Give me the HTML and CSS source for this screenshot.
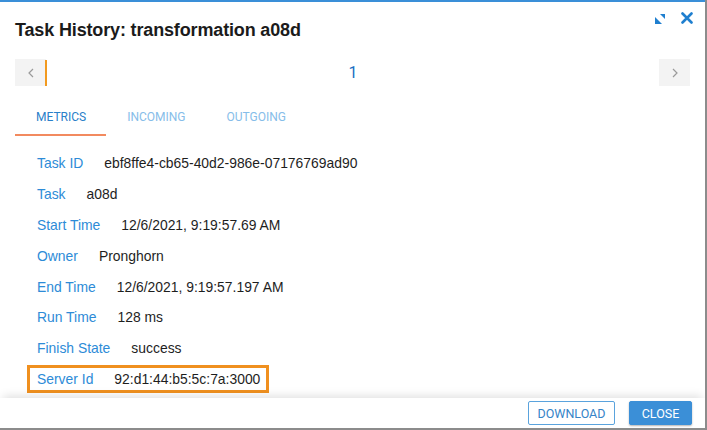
FILE: index.html
```html
<!DOCTYPE html>
<html>
<head>
<meta charset="utf-8">
<link rel="stylesheet" href="styles.css">
</head>
<body>
<div class="dialog">
  <div class="header">
    <h1 class="title">Task History: transformation a08d</h1>
    <div class="actions">
      <svg class="ico-expand" width="10" height="10" viewBox="0 0 10 10"><polygon points="5,0 10,0 10,5" fill="#1f7fcf"/><polygon points="0,3 0,10 7,10" fill="#1f7fcf"/></svg>
      <svg class="ico-close" width="12" height="12" viewBox="0 0 12 12"><path d="M1.5 1.5 L10.5 10.5 M10.5 1.5 L1.5 10.5" stroke="#1f7fcf" stroke-width="2.6" stroke-linecap="round"/></svg>
    </div>
  </div>
  <div class="pager">
    <div class="pbtn"><svg width="6" height="10" viewBox="0 0 6 10"><path d="M5 1 L1 5 L5 9" fill="none" stroke="#9a9a9a" stroke-width="1.2"/></svg></div>
    <div class="pmark"></div>
    <div class="pnum">1</div>
    <div class="pbtn"><svg width="6" height="10" viewBox="0 0 6 10"><path d="M1 1 L5 5 L1 9" fill="none" stroke="#9a9a9a" stroke-width="1.2"/></svg></div>
  </div>
  <div class="tabs">
    <div class="tab active">METRICS</div>
    <div class="tab">INCOMING</div>
    <div class="tab">OUTGOING</div>
  </div>
  <div class="content">
    <div class="row"><span class="lbl">Task ID</span><span class="val">ebf8ffe4-cb65-40d2-986e-07176769ad90</span></div>
    <div class="row"><span class="lbl">Task</span><span class="val">a08d</span></div>
    <div class="row"><span class="lbl">Start Time</span><span class="val">12/6/2021, 9:19:57.69 AM</span></div>
    <div class="row"><span class="lbl">Owner</span><span class="val">Pronghorn</span></div>
    <div class="row"><span class="lbl">End Time</span><span class="val">12/6/2021, 9:19:57.197 AM</span></div>
    <div class="row"><span class="lbl">Run Time</span><span class="val">128 ms</span></div>
    <div class="row"><span class="lbl">Finish State</span><span class="val">success</span></div>
    <div class="row hl"><span class="lbl">Server Id</span><span class="val">92:d1:44:b5:5c:7a:3000</span></div>
  </div>
  <div class="footer">
    <button class="btn outline">DOWNLOAD</button>
    <button class="btn primary">CLOSE</button>
  </div>
</div>
</body>
</html>
```
FILE: styles.css
```css
html, body { margin: 0; padding: 0; }
body { background: #8c8c8c; width: 707px; height: 430px; overflow: hidden; }
.dialog {
  width: 705px; height: 428px; background: #fff;
  border-top: 2px solid #3a8fd8; box-sizing: border-box;
  display: flex; flex-direction: column; overflow: hidden;
  font-family: "Liberation Sans", Arial, sans-serif;
}
.header { height: 50px; flex: none; display: flex; justify-content: space-between; align-items: flex-start; padding: 0 12px 0 15px; }
.title { margin: 18px 0 0; font-size: 18px; font-weight: bold; color: #1b1b1b; line-height: 20px; letter-spacing: -0.15px; }
.actions { display: flex; align-items: center; margin-top: 10px; gap: 16px; }
.ico-expand { margin-top: 1px; }
.pager { flex: none; display: flex; align-items: center; height: 27px; margin: 7px 15px 0 15px; }
.pbtn { width: 31px; height: 27px; background: #f3f3f3; display: flex; align-items: center; justify-content: center; }
.pmark { width: 2px; height: 26px; background: #f29a1f; margin-left: -1px; }
.pnum { flex: 1; text-align: center; font-family: Roboto, sans-serif; font-size: 16px; color: #1a6ec2; }
.tabs { flex: none; display: flex; margin: 14px 0 0 15px; height: 36px; }
.tab { font-family: Roboto, sans-serif; font-size: 12px; color: #86bde9; padding: 0 20px 0 21px; line-height: 35px; }
.tab.active { color: #2a80c9; border-bottom: 2px solid #f28a5f; }
.content { flex: 1; padding-top: 12px; overflow: hidden; display: flex; flex-direction: column; }
.row { height: 30.8px; display: flex; align-items: center; padding-left: 37px; font-size: 13.9px; }
.lbl { color: #2d8bd7; margin-right: 21px; }
.val { color: #1e1e1e; }
.row.hl { margin-left: 27px; padding: 0 6px 0 7px; align-self: flex-start; width: max-content; height: 22px; border: 3px solid #f0901f; margin-top: 1px; }
.footer { flex: none; height: 30px; display: flex; justify-content: flex-end; align-items: center; gap: 14px; padding-right: 13px; box-shadow: 0 -5px 10px -3px rgba(0,0,0,0.13); position: relative; }
.btn { font-family: Roboto, sans-serif; font-size: 12.5px; height: 24px; border-radius: 2px; padding: 0; cursor: pointer; }
.btn.outline { width: 87px; background: #fff; border: 1px solid #5aa3dd; color: #3584c8; }
.btn.primary { width: 63px; background: #3b8fd7; border: 1px solid #3b8fd7; color: #fff; box-shadow: 0 1px 2px rgba(0,0,0,0.3); }
```
